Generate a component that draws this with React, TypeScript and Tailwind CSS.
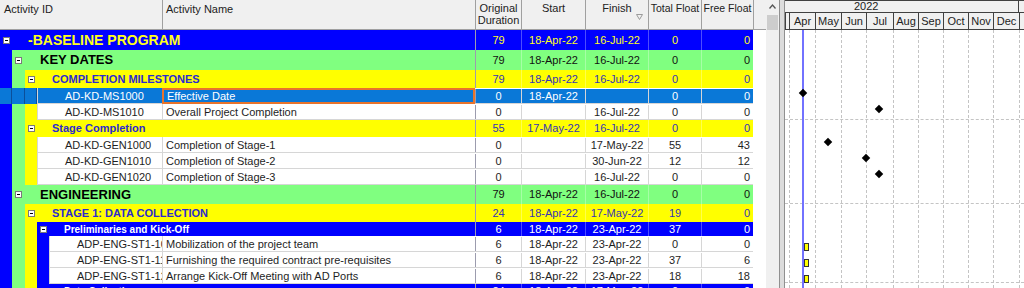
import React from 'react';

type Band = { kind: 'band'; lvl: 0 | 1 | 2 | 3; h: string; title: string; v: string[] };
type Task = { kind: 'task'; depth: 3 | 4; h: string; id: string; name: string; v: string[]; sel?: boolean };
type Row = Band | Task;

const cols = [
    { w: 'w-[46px]', a: 'justify-center' },
    { w: 'w-[64px]', a: 'justify-center' },
    { w: 'w-[63px]', a: 'justify-center' },
    { w: 'w-[53px]', a: 'justify-center' },
    { w: 'w-[52px]', a: 'justify-end pr-[3px]' }
];

const stripBg = ['bg-[#0000ff]', 'bg-[#80ff80]', 'bg-[#ffff00]', 'bg-[#0000ff]'];
const stripW = ['w-[12px]', 'w-[13px]', 'w-[12px]', 'w-[12px]'];

const bandStyle = [
    { bg: 'bg-[#0000ff]', title: 'text-[14px] text-[#ffff1a]', num: 'text-[#ffff1a]', gap: 'ml-[18px]' },
    { bg: 'bg-[#80ff80]', title: 'text-[13px] text-black', num: 'text-[#111111]', gap: 'ml-[18px]' },
    { bg: 'bg-[#ffff00]', title: 'text-[11px] text-[#2b2bcf]', num: 'text-[#3535b5]', gap: 'ml-[17px]' },
    { bg: 'bg-[#0000ff]', title: 'text-[10px] text-white', num: 'text-white', gap: 'ml-[17px]' }
];

const rows: Row[] = [
    { kind: 'band', lvl: 0, h: 'h-[20px]', title: '-BASELINE PROGRAM', v: ['79', '18-Apr-22', '16-Jul-22', '0', '0'] },
    { kind: 'band', lvl: 1, h: 'h-[20px]', title: 'KEY DATES', v: ['79', '18-Apr-22', '16-Jul-22', '0', '0'] },
    { kind: 'band', lvl: 2, h: 'h-[18px]', title: 'COMPLETION MILESTONES', v: ['79', '18-Apr-22', '16-Jul-22', '0', '0'] },
    { kind: 'task', depth: 3, h: 'h-[16px]', id: 'AD-KD-MS1000', name: 'Effective Date', v: ['0', '18-Apr-22', '', '0', '0'], sel: true },
    { kind: 'task', depth: 3, h: 'h-[16px]', id: 'AD-KD-MS1010', name: 'Overall Project Completion', v: ['0', '', '16-Jul-22', '0', '0'] },
    { kind: 'band', lvl: 2, h: 'h-[17px]', title: 'Stage Completion', v: ['55', '17-May-22', '16-Jul-22', '0', '0'] },
    { kind: 'task', depth: 3, h: 'h-[16px]', id: 'AD-KD-GEN1000', name: 'Completion of Stage-1', v: ['0', '', '17-May-22', '55', '43'] },
    { kind: 'task', depth: 3, h: 'h-[16px]', id: 'AD-KD-GEN1010', name: 'Completion of Stage-2', v: ['0', '', '30-Jun-22', '12', '12'] },
    { kind: 'task', depth: 3, h: 'h-[16px]', id: 'AD-KD-GEN1020', name: 'Completion of Stage-3', v: ['0', '', '16-Jul-22', '0', '0'] },
    { kind: 'band', lvl: 1, h: 'h-[19px]', title: 'ENGINEERING', v: ['79', '18-Apr-22', '16-Jul-22', '0', '0'] },
    { kind: 'band', lvl: 2, h: 'h-[18px]', title: 'STAGE 1: DATA COLLECTION', v: ['24', '18-Apr-22', '17-May-22', '19', '0'] },
    { kind: 'band', lvl: 3, h: 'h-[14px]', title: 'Preliminaries and Kick-Off', v: ['6', '18-Apr-22', '23-Apr-22', '37', '0'] },
    { kind: 'task', depth: 4, h: 'h-[16px]', id: 'ADP-ENG-ST1-1000', name: 'Mobilization of the project team', v: ['6', '18-Apr-22', '23-Apr-22', '0', '0'] },
    { kind: 'task', depth: 4, h: 'h-[16px]', id: 'ADP-ENG-ST1-1100', name: 'Furnishing the required contract pre-requisites', v: ['6', '18-Apr-22', '23-Apr-22', '37', '6'] },
    { kind: 'task', depth: 4, h: 'h-[16px]', id: 'ADP-ENG-ST1-1200', name: 'Arrange Kick-Off Meeting with AD Ports', v: ['6', '18-Apr-22', '23-Apr-22', '18', '18'] },
    { kind: 'band', lvl: 3, h: 'h-[14px]', title: 'Data Collection', v: ['24', '18-Apr-22', '17-May-22', '0', '0'] }
];

const months = [
    { m: 'Apr', w: 'w-[26px]' },
    { m: 'May', w: 'w-[26px]' },
    { m: 'Jun', w: 'w-[25px]' },
    { m: 'Jul', w: 'w-[27px]' },
    { m: 'Aug', w: 'w-[25px]' },
    { m: 'Sep', w: 'w-[25px]' },
    { m: 'Oct', w: 'w-[25px]' },
    { m: 'Nov', w: 'w-[25px]' },
    { m: 'Dec', w: 'w-[26px]' }
];

const Toggle = () => (
    <span className="ml-[3px] flex h-[7px] w-[7px] shrink-0 items-center justify-center border border-[#7a7a7a] bg-white">
        <span className="h-px w-[3px] bg-black" />
    </span>
);

const Strips = ({ n, sel }: { n: number; sel?: boolean }) => (
    <>
        {Array.from({ length: n }).map((_, i) => (
            <div
                key={i}
                className={`${stripW[i]} shrink-0 ${sel ? 'border-r border-[#0b4f9a] bg-[#0a78d7]' : stripBg[i]}`}
            />
        ))}
    </>
);

const Nums = ({ v, cls, line }: { v: string[]; cls: string; line: string }) => (
    <div className={`flex text-[11px] ${cls}`}>
        {cols.map((c, i) => (
            <div
                key={i}
                className={`flex items-center ${c.w} ${c.a} border-l ${i === 0 ? 'border-[#9c9cae]' : line}`}
            >
                {v[i]}
            </div>
        ))}
    </div>
);

const BandRow = ({ r }: { r: Band }) => {
    const st = bandStyle[r.lvl];
    return (
        <div className={`flex shrink-0 ${r.h}`}>
            <div className="flex w-[475px]">
                <Strips n={r.lvl} />
                <div className={`flex flex-1 items-center ${st.bg}`}>
                    <Toggle />
                    <span className={`${st.gap} whitespace-nowrap font-bold ${st.title}`}>{r.title}</span>
                </div>
            </div>
            <Nums v={r.v} cls={`${st.bg} ${st.num}`} line="border-white/30" />
        </div>
    );
};

const TaskRow = ({ r }: { r: Task }) => {
    const idW = r.depth === 3 ? 'w-[125px]' : 'w-[113px]';
    const base = r.sel ? 'bg-[#0a78d7] text-white' : 'bg-white text-[#1e1e1e]';
    return (
        <div className={`flex shrink-0 ${r.h}`}>
            <Strips n={r.depth} sel={r.sel} />
            <div className={`flex ${idW} items-center overflow-hidden whitespace-nowrap border-b border-l border-[#d6d6d6] pl-[27px] pt-px text-[11px] ${base}`}>
                {r.id}
            </div>
            <div
                className={`flex w-[313px] items-center overflow-hidden whitespace-nowrap pl-[3px] text-[11px] ${
                    r.sel ? 'border-2 border-[#e8742c] bg-[#0a78d7] text-white' : 'border-b border-l border-[#d6d6d6] bg-white pt-px text-[#1e1e1e]'
                }`}
            >
                {r.name}
            </div>
            <div className="border-b border-[#d6d6d6] pt-px">
                <Nums v={r.v} cls={r.sel ? 'h-full bg-[#0a78d7] text-white' : 'h-full bg-white text-[#1e1e1e]'} line="border-[#d6d6d6]" />
            </div>
        </div>
    );
};

const Header = () => (
    <div className="flex h-[30px] shrink-0 border-b border-[#a0a0a0] bg-[#f0f0f0] text-[11px] leading-[12px] text-[#222]">
        <div className="w-[162px] pl-[4px] pt-[3px]">Activity ID</div>
        <div className="w-[313px] border-l border-[#a0a0a0] pl-[3px] pt-[3px]">Activity Name</div>
        <div className="w-[46px] border-l border-[#a0a0a0] pt-[2px] text-center">Original<br />Duration</div>
        <div className="w-[64px] border-l border-[#a0a0a0] pt-[2px] text-center">Start</div>
        <div className="relative w-[63px] border-l border-[#a0a0a0] pt-[2px] text-center">
            Finish
            <svg className="absolute right-[5px] top-[14px]" width="7" height="6" viewBox="0 0 7 6">
                <path d="M0.5 0.5 H6.5 L3.5 5.5 Z" fill="none" stroke="#9a9a9a" strokeWidth="1" />
            </svg>
        </div>
        <div className="w-[53px] border-l border-[#a0a0a0] pt-[2px] text-center text-[10.5px]">Total Float</div>
        <div className="w-[52px] border-l border-[#a0a0a0] pt-[2px] text-center text-[10.5px]">Free Float</div>
        <div className="flex-1 border-l border-[#a0a0a0]" />
    </div>
);

const Diamond = ({ pos }: { pos: string }) => (
    <div className={`absolute h-[6px] w-[6px] rotate-45 bg-black ${pos}`} />
);

const Bar = ({ pos }: { pos: string }) => (
    <div className={`absolute h-[8px] w-[5px] border border-[#333] bg-[#ffff00] ${pos}`} />
);

const Gantt = () => (
    <div className="flex flex-1 flex-col text-[11px] text-[#222]">
        <div className="flex h-[13px] shrink-0 border-y border-[#404040] bg-[#f0f0f0] leading-[11px]">
            <div className="w-[234px] border-r border-[#404040] pl-[69px]">2022</div>
            <div className="flex-1" />
        </div>
        <div className="flex h-[17px] shrink-0 border-b border-[#404040] bg-[#f0f0f0]">
            <div className="w-[4px] border-l border-[#404040]" />
            {months.map(m => (
                <div key={m.m} className={`flex ${m.w} items-center justify-center border-l border-[#404040]`}>{m.m}</div>
            ))}
            <div className="flex-1 border-l border-[#404040]" />
        </div>
        <div className="relative flex flex-1 bg-white">
            <div className="w-[4px]" />
            {months.map(m => (
                <div key={m.m} className={`${m.w} border-l border-dashed border-[#c4c4c4]`} />
            ))}
            <div className="flex-1 border-l border-dashed border-[#c4c4c4]" />

            <div className="absolute left-0 right-0 top-[89px] border-t border-dashed border-[#c4c4c4]" />
            <div className="absolute left-0 right-0 top-[173px] border-t border-dashed border-[#c4c4c4]" />
            <div className="absolute left-0 right-0 top-[252px] border-t border-dashed border-[#c4c4c4]" />

            <div className="absolute bottom-0 left-[17px] top-0 w-[2px] bg-[#7272ff]" />

            <Diamond pos="left-[15px] top-[60px]" />
            <Diamond pos="left-[91px] top-[76px]" />
            <Diamond pos="left-[40px] top-[109px]" />
            <Diamond pos="left-[78px] top-[125px]" />
            <Diamond pos="left-[91px] top-[141px]" />

            <Bar pos="left-[19px] top-[213px]" />
            <Bar pos="left-[19px] top-[229px]" />
            <Bar pos="left-[19px] top-[245px]" />
        </div>
    </div>
);

const App = () => {
    return (
        <div className="flex h-[288px] w-[1024px] overflow-hidden bg-white font-['Liberation_Sans',Arial,sans-serif]">
            <div className="flex w-[766px] shrink-0 flex-col overflow-hidden">
                <Header />
                <div className="flex w-[753px] shrink-0 flex-col">
                    {rows.map((r, i) =>
                        r.kind === 'band' ? <BandRow key={i} r={r} /> : <TaskRow key={i} r={r} />
                    )}
                </div>
            </div>
            <div className="flex w-[13px] shrink-0 flex-col items-center bg-[#f0f0f0]">
                <svg className="mt-[4px]" width="7" height="5" viewBox="0 0 7 5">
                    <path d="M0.5 4.5 L3.5 1 L6.5 4.5" fill="none" stroke="#555" strokeWidth="1.3" />
                </svg>
                <div className="mt-[6px] h-[15px] w-[11px] bg-[#cdcdcd]" />
            </div>
            <div className="w-[6px] shrink-0 border-x border-[#909090] bg-[#dcdcdc]" />
            <Gantt />
        </div>
    );
};

export default App;
